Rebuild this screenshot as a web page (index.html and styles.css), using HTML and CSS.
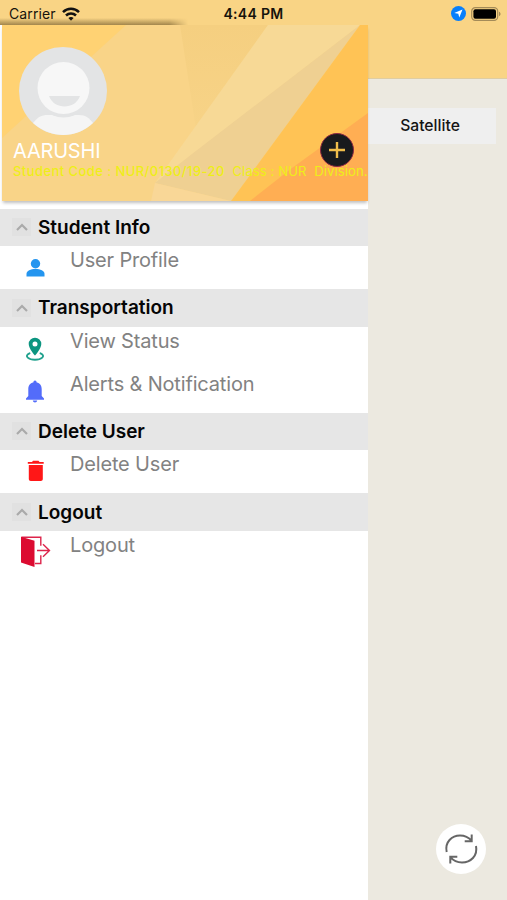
FILE: index.html
```html
<!DOCTYPE html>
<html lang="en">

<head>
    <meta charset="UTF-8">
    <meta name="viewport" content="width=device-width, initial-scale=1.0">
    <title>Student Menu</title>
    <link rel="stylesheet" href="styles.css">
</head>

<body>
    <!-- Status Bar -->
    <header class="status-bar">
        <div class="carrier">
            <span>Carrier</span>
            <svg width="18" height="14" viewBox="0 0 18 14" fill="none" stroke="#111" stroke-width="2.5">
                <path d="M1 5.2C5.5.7 12.5.7 17 5.2M4 8.500c2.8-2.8 7.2-2.8 10 0" />
                <path d="M9 13.7l-2.600-2.600c1.4-1.500 3.8-1.500 5.2 0z" fill="#111" stroke="none" />
            </svg>
        </div>
        <div class="time">4:44 PM</div>
        <div class="indicators">
            <svg width="15" height="15" viewBox="0 0 15 15">
                <circle cx="7.5" cy="7.5" r="7.5" fill="#087ffb" />
                <path d="M11.5 3.5L8.3 11.6 7.3 7.8 3.3 7z" fill="#fff" />
            </svg>
            <svg width="30" height="14" viewBox="0 0 30 14">
                <rect x=".7" y=".7" width="26" height="12.6" rx="3.6" fill="none" stroke="#a48b58" stroke-width="1.2" />
                <rect x="2.4" y="2.3" width="22.6" height="9.4" rx="2" />
                <path d="M28 4.8c2 .7 2 3.7 0 4.4z" fill="#a48b58" />
            </svg>
        </div>
    </header>

    <div class="app">
        <!-- Side Menu -->
        <aside class="drawer">
            <div class="banner">
                <svg class="facets" viewBox="0 0 366 176" preserveAspectRatio="none">
                    <defs>
                        <linearGradient id="shade" x1="0" y1="0" x2="0" y2="1">
                            <stop offset="0" stop-color="#f5cf80" />
                            <stop offset="1" stop-color="#f7d387" />
                        </linearGradient>
                    </defs>
                    <rect width="366" height="176" fill="#f9d488" />
                    <path d="M0 0h124L0 113z" fill="#ffd273" />
                    <path d="M178 0h88L194 104z" fill="url(#shade)" />
                    <path d="M266 0h92L153 158z" fill="#f7d996" />
                    <path d="M358 0L190 129 153 158 229 176z" fill="#efd092" />
                    <path d="M153 158l76 18h-80z" fill="#f9d797" />
                    <path d="M358 0h8v176H229z" fill="#ffc355" />
                    <path d="M366 88v88H248l42-33z" fill="#ffae53" />
                </svg>
                <svg class="avatar" viewBox="0 0 88 88">
                    <circle cx="44" cy="44" r="44" fill="#e3e4e5" />
                    <path d="M14 76c5-6 8-8 15-8h31c7 0 10 3 14 8-17 16-42 16-60 0z" fill="#f5f5f5" />
                    <circle cx="44.500" cy="42" r="28.500" fill="#e3e4e5" />
                    <circle cx="44.500" cy="41" r="26" fill="#f7f7f7" />
                    <path d="M30 49h31c-5 14-26 14-31 0z" fill="#e3e4e5" />
                </svg>
                <div class="name">AARUSHI</div>
                <div class="details"><b>Student Code : NUR/0130/19-20</b>&nbsp; Class : NUR&nbsp; Division.</div>
                <button class="add" aria-label="Add">
                    <svg width="16" height="16" viewBox="0 0 16 16" stroke="#efbd4b" stroke-width="2.4">
                        <path d="M8 0v16M0 8h16" />
                    </svg>
                </button>
            </div>

            <nav class="menu">
                <h2><span class="toggle"><svg viewBox="0 0 12 8"><path d="M1 7l5-5 5 5" /></svg></span>Student Info</h2>
                <a class="item">
                    <svg class="icon" viewBox="0 0 32 32" fill="#2495ef">
                        <circle cx="16.500" cy="8.700" r="4.7" />
                        <path d="M7.500 21.500v-2.4c0-3.5 4.2-5 9-5s9 1.5 9 5v2.4z" />
                    </svg>
                    <span>User Profile</span>
                </a>

                <h2><span class="toggle"><svg viewBox="0 0 12 8"><path d="M1 7l5-5 5 5" /></svg></span>Transportation</h2>
                <a class="item">
                    <svg class="icon" viewBox="0 0 32 32" fill="#0c9580">
                        <path fill-rule="evenodd" d="M16 1.7a6.2 6.2 0 0 0-6.3 6.2c0 4.6 6.3 11.6 6.3 11.6s6.3-7 6.3-11.6A6.2 6.2 0 0 0 16 1.7zm0 3.9a2.5 2.5 0 1 1 0 5 2.5 2.5 0 0 1 0-5z" />
                        <path d="M10.500 17.3c-6 3-.5 6.4 5.500 6.4s11.500-3.4 5.500-6.4" fill="none" stroke="#20a18d" stroke-width="1.9" stroke-linecap="round" />
                    </svg>
                    <span>View Status</span>
                </a>
                <a class="item">
                    <svg class="icon" viewBox="0 0 32 32" fill="#536cfa">
                        <path d="M16 1.5c1.2 0 1.5.8 1.5 1.8 3.7.8 5.2 3.6 5.2 7V17l2.3 2.5v1.2H7v-1.2L9.3 17v-6.7c0-3.4 1.5-6.2 5.2-7 0-1 .3-1.8 1.5-1.8z" />
                        <path d="M13.8 21.5h4.4c-.2 2.5-4.2 2.5-4.4 0z" />
                    </svg>
                    <span>Alerts &amp; Notification</span>
                </a>

                <h2><span class="toggle"><svg viewBox="0 0 12 8"><path d="M1 7l5-5 5 5" /></svg></span>Delete User</h2>
                <a class="item">
                    <svg class="icon" viewBox="0 0 32 32" fill="#ff1717">
                        <path d="M8.8 3H13l1-1.2h5.500l1 1.2h4.200v1.800H8.800zM9.800 6h14v14c0 1.2-.8 2-2 2h-10c-1.2 0-2-.8-2-2z" />
                    </svg>
                    <span>Delete User</span>
                </a>

                <h2><span class="toggle"><svg viewBox="0 0 12 8"><path d="M1 7l5-5 5 5" /></svg></span>Logout</h2>
                <a class="item">
                    <svg class="icon" viewBox="0 0 32 32" fill="none" stroke="#dd244b" stroke-width="1.4">
                        <path d="M2.500-2.800h19.300v8.600M21.800 15.200v8.300H16M18 10.500h12.500M24 4.200l6.500 6.300-6.500 6.300" />
                        <path d="M2-3.300L15.500.7v26.200L2 22.500z" fill="#dc0b31" stroke="none" />
                    </svg>
                    <span>Logout</span>
                </a>
            </nav>
        </aside>

        <!-- Map Behind The Menu -->
        <main class="map">
            <div class="nav-bar"></div>
            <button class="satellite">Satellite</button>
            <button class="refresh" aria-label="Refresh">
                <svg width="34" height="34" viewBox="0 0 34 34" fill="none" stroke="#666" stroke-width="2">
                    <path d="M2.700 20C.5 10 8 3.500 16 3.500c5 0 9 2.200 11.700 5.300M27.700 2.500v6.800h-7" />
                    <path d="M32 14c2 10-5.500 16.500-14 16.500-5 0-9-2.200-11.700-5.300M6.300 31.500v-6.800h7" />
                </svg>
            </button>
        </main>
    </div>
</body>

</html>
```
FILE: styles.css
```css
* {
    box-sizing: border-box;
}

body {
    font-family: Inter, 'Liberation Sans', sans-serif;
    margin: 0;
    height: 100vh;
    overflow: hidden;
    background-color: #f9d485;
    display: flex;
    flex-direction: column;
}

svg {
    display: block;
    flex: none;
    overflow: visible;
}

button {
    font-family: inherit;
    border: none;
    padding: 0;
}

/* Status Bar */
.status-bar {
    height: 25px;
    position: relative;
    display: grid;
    grid-template-columns: 1fr auto 1fr;
    align-items: center;
    padding: 2px 6px 0 9px;
    font-size: 14px;
    color: #16130c;
}

.status-bar::after {
    content: '';
    position: absolute;
    left: 0;
    bottom: 0;
    width: 188px;
    height: 7px;
    background: linear-gradient(rgba(90, 70, 30, 0), rgba(90, 70, 30, 0.55));
    -webkit-mask-image: linear-gradient(90deg, #000 90%, transparent);
    mask-image: linear-gradient(90deg, #000 90%, transparent);
}

.carrier {
    display: flex;
    align-items: center;
    gap: 6px;
    letter-spacing: 0.1px;
}

.time {
    font-weight: 600;
    letter-spacing: 0.3px;
    margin-right: 3px;
}

.indicators {
    display: flex;
    align-items: center;
    justify-content: flex-end;
    gap: 5px;
}

.app {
    flex: 1;
    display: flex;
}

/* Side Menu */
.drawer {
    width: 368px;
    background-color: #fff;
}

.banner {
    position: relative;
    height: 176px;
    margin-left: 2px;
    padding: 22px 0 0 11px;
    box-shadow: 0 3px 3px -1px rgba(0, 0, 0, 0.25);
}

.facets {
    position: absolute;
    top: 0;
    left: 0;
    width: 100%;
    height: 100%;
}

.avatar {
    position: relative;
    width: 88px;
    height: 88px;
    margin-left: 6px;
}

.name {
    position: relative;
    margin-top: 4px;
    font-size: 20px;
    line-height: 24px;
    letter-spacing: -0.2px;
    color: #fff;
}

.details {
    position: relative;
    font-size: 13px;
    line-height: 16px;
    letter-spacing: 0.14px;
    white-space: nowrap;
    color: #eeee18;
}

.details b {
    font-weight: 500;
    letter-spacing: 0.43px;
}

.add {
    position: absolute;
    right: 14px;
    top: 108px;
    width: 34px;
    height: 34px;
    border: 1px solid #8c2943;
    border-radius: 50%;
    background-color: #181a1d;
    display: grid;
    place-items: center;
}

.menu {
    margin-top: 7.5px;
}

.menu h2 {
    display: flex;
    align-items: center;
    gap: 7px;
    height: 37.6px;
    margin: 0;
    padding-left: 12px;
    background-color: #e6e6e6;
    color: #050505;
    font-size: 19px;
    font-weight: 600;
}

.toggle {
    width: 19px;
    height: 18px;
    background-color: #e1e1e1;
    display: grid;
    place-items: center;
}

.toggle svg {
    width: 12px;
    height: 8px;
    fill: none;
    stroke: #aaa;
    stroke-width: 2.2;
}

.item {
    display: flex;
    height: 43px;
    padding-left: 19px;
    color: #828282;
    font-size: 20px;
    line-height: 29px;
    letter-spacing: -0.17px;
}

.icon {
    width: 32px;
    height: 32px;
    margin: 9px 19px 0 0;
}

/* Map */
.map {
    flex: 1;
    display: flex;
    flex-direction: column;
    background-color: #ece9e0;
}

.nav-bar {
    height: 54px;
    background-color: #f9d485;
    border-bottom: 1px solid #dfcda2;
}

.satellite {
    width: 128px;
    height: 36px;
    margin-top: 29px;
    padding: 0 4px 1px 0;
    background-color: #efefef;
    color: #151515;
    font-size: 15.7px;
    font-weight: 500;
}

.refresh {
    width: 50px;
    height: 50px;
    margin: auto 0 26px 68px;
    border-radius: 50%;
    background-color: #fff;
    display: grid;
    place-items: center;
}
```
